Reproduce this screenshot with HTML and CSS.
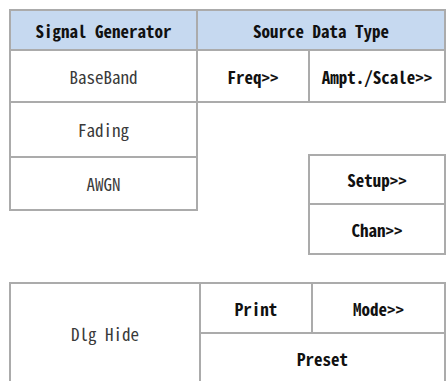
FILE: index.html
```html
<!DOCTYPE html>
<html lang="en">
<head>
  <meta charset="UTF-8">
  <meta name="viewport" content="width=device-width, initial-scale=1.0">
  <title>Signal Generator</title>
  <link rel="stylesheet" href="styles.css">
</head>
<body>

  <div class="top">
    <div class="col-left">
      <div class="cell head first">Signal Generator</div>
      <div class="cell plain base">BaseBand</div>
      <div class="cell plain fading">Fading</div>
      <div class="cell plain awgn">AWGN</div>
    </div>
    <div class="col-right">
      <div class="cell head">Source Data Type</div>
      <div class="pair">
        <div class="cell key freq">Freq&gt;&gt;</div>
        <div class="cell key ampt">Ampt./Scale&gt;&gt;</div>
      </div>
      <div class="side">
        <div class="cell key setup">Setup&gt;&gt;</div>
        <div class="cell key chan">Chan&gt;&gt;</div>
      </div>
    </div>
  </div>

  <div class="bottom">
    <div class="cell plain dlg">Dlg Hide</div>
    <div class="actions">
      <div class="pair">
        <div class="cell key print">Print</div>
        <div class="cell key mode">Mode&gt;&gt;</div>
      </div>
      <div class="cell key preset">Preset</div>
    </div>
  </div>

</body>
</html>
```
FILE: styles.css
```css
html, body {
  overflow: hidden;
}
body {
  margin: 0;
  background: #fff;
  font-family: "Noto Sans Mono CJK SC", "Liberation Mono", monospace;
  font-size: 17px;
}
.cell {
  box-sizing: border-box;
  display: flex;
  align-items: center;
  justify-content: center;
  white-space: nowrap;
  border: 0 solid #ababab;
}
.plain {
  color: #3a3a3a;
}
.key, .head {
  color: #111;
  font-weight: bold;
}

/* top block */
.top {
  display: flex;
  margin: 9px 0 0 9px;
}
.col-left {
  width: 191px;
}
.col-left .cell {
  border-width: 0 2px 2px 2px;
}
.col-left .first {
  border-top-width: 2px;
}
.head {
  height: 42px;
  background: #c6d9f0;
}
.base { height: 52px; }
.fading { height: 55px; }
.awgn { height: 53px; }

.col-right {
  width: 248px;
}
.col-right .head {
  border-width: 2px 2px 2px 0;
}
.pair {
  display: flex;
  height: 52px;
}
.pair .cell {
  height: 100%;
  border-width: 0 2px 2px 0;
}
.freq { width: 112px; }
.ampt { width: 136px; }

.side {
  margin: 51px 0 0 110px;
  width: 138px;
}
.side .cell {
  border-width: 0 2px 2px 2px;
}
.setup {
  height: 51px;
  border-top-width: 2px !important;
}
.chan { height: 50px; }

/* bottom block */
.bottom {
  display: flex;
  margin: 27px 0 0 9px;
}
.dlg {
  width: 194px;
  height: 102px;
  border-width: 2px;
}
.actions {
  width: 245px;
}
.bottom .pair .cell {
  border-top-width: 2px;
}
.print { width: 112px; }
.mode { width: 133px; }
.preset {
  height: 50px;
  border-width: 0 2px 2px 0;
}
```
